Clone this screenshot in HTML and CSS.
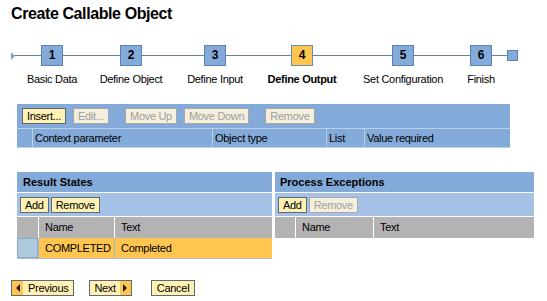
FILE: index.html
```html
<!DOCTYPE html>
<html lang="en">
<head>
    <meta charset="UTF-8">
    <title>Create Callable Object</title>
    <link rel="stylesheet" href="styles.css">
</head>
<body>
    <div class="page">
        <h1 class="title">Create Callable Object</h1>

        <!-- roadmap -->
        <div class="roadmap">
            <div class="rm-start"><span class="rm-arrow"></span></div>
            <div class="step" style="width: 74px">
                <div class="node"><span class="box">1</span></div>
                <div class="label">Basic Data</div>
            </div>
            <div class="step" style="width: 84px">
                <div class="node"><span class="box">2</span></div>
                <div class="label">Define Object</div>
            </div>
            <div class="step" style="width: 84px">
                <div class="node"><span class="box">3</span></div>
                <div class="label">Define Input</div>
            </div>
            <div class="step current" style="width: 90px">
                <div class="node"><span class="box">4</span></div>
                <div class="label">Define Output</div>
            </div>
            <div class="step" style="width: 112px">
                <div class="node"><span class="box">5</span></div>
                <div class="label">Set Configuration</div>
            </div>
            <div class="step" style="width: 44px">
                <div class="node"><span class="box">6</span></div>
                <div class="label">Finish</div>
            </div>
            <div class="rm-end"><span class="rm-square"></span></div>
        </div>

        <!-- context parameters -->
        <div class="panel params">
            <div class="toolbar dark">
                <button class="btn">Insert...</button>
                <button class="btn" disabled>Edit...</button>
                <button class="btn gap-left" disabled>Move Up</button>
                <button class="btn" disabled>Move Down</button>
                <button class="btn gap-left" disabled>Remove</button>
            </div>
            <div class="param-head">
                <div class="cell"></div>
                <div class="cell">Context parameter</div>
                <div class="cell">Object type</div>
                <div class="cell">List</div>
                <div class="cell">Value required</div>
            </div>
        </div>

        <div class="split">
            <div class="panel states">
                <div class="panel-title">Result States</div>
                <div class="toolbar light">
                    <button class="btn">Add</button>
                    <button class="btn">Remove</button>
                </div>
                <div class="table-head states-cols">
                    <div class="cell"></div>
                    <div class="cell">Name</div>
                    <div class="cell">Text</div>
                </div>
                <div class="table-row selected states-cols">
                    <div class="cell sel"></div>
                    <div class="cell">COMPLETED</div>
                    <div class="cell">Completed</div>
                </div>
            </div>

            <div class="panel exceptions">
                <div class="panel-title">Process Exceptions</div>
                <div class="toolbar light">
                    <button class="btn">Add</button>
                    <button class="btn" disabled>Remove</button>
                </div>
                <div class="table-head exc-cols">
                    <div class="cell"></div>
                    <div class="cell">Name</div>
                    <div class="cell">Text</div>
                </div>
            </div>
        </div>

        <div class="nav">
            <button class="btn nav-btn prev"><span class="arr arr-left"></span><span class="txt">Previous</span></button>
            <button class="btn nav-btn next"><span class="txt">Next</span><span class="arr arr-right"></span></button>
            <button class="btn nav-btn cancel"><span class="txt">Cancel</span></button>
        </div>
    </div>
</body>
</html>
```

FILE: styles.css
```css
body {
    margin: 0;
    background-color: #fff;
    color: #000;
    font-family: 'Liberation Sans', Arial, sans-serif;
    font-size: 11px;
    letter-spacing: -0.3px;
}
.page { padding: 0 11px; }
.title {
    margin: 0;
    padding-top: 4px;
    font-size: 16px;
    line-height: 20px;
    letter-spacing: -0.4px;
    font-weight: bold;
}

/* roadmap */
.roadmap {
    display: flex;
    margin-top: 21px;
}
.rm-start, .rm-end, .node {
    height: 21px;
    display: flex;
    align-items: center;
    background: linear-gradient(#5d83ad, #5d83ad) center / 100% 1px no-repeat;
}
.rm-start { width: 4px; }
.rm-arrow {
    width: 0; height: 0;
    border-top: 4px solid transparent;
    border-bottom: 4px solid transparent;
    border-left: 4px solid #7ea3cf;
}
.rm-end { width: 15px; justify-content: flex-end; }
.rm-square {
    width: 9px; height: 9px;
    background-color: #84aad9;
    border: 1px solid #5a82b4;
}
.step { flex: none; display: flex; flex-direction: column; align-items: center; }
.node { width: 100%; justify-content: center; }
.box {
    width: 20px; height: 19px;
    border: 1px solid #5a82b4;
    background-color: #84aad9;
    font-weight: bold;
    font-size: 12px;
    line-height: 19px;
    letter-spacing: 0;
    text-align: center;
}
.step.current .box { background-color: #ffc64f; border-color: #6a8ab0; }
.label {
    margin-top: 6px;
    line-height: 14px;
    white-space: nowrap;
}
.step.current .label { font-weight: bold; }

/* panels */
.panel { margin-left: 6px; }
.params { width: 493px; margin-top: 18px; }
.toolbar {
    display: flex;
    align-items: flex-start;
    gap: 7px;
    padding: 4px 0 0 5px;
    height: 20px;
}
.toolbar.dark { background-color: #84aad9; }
.toolbar.light {
    background-color: #a5c1e5;
    height: 19px;
    gap: 2px;
    padding-left: 3px;
    border-top: 1px solid #fff;
}
.gap-left { margin-left: 9px; }

.btn {
    height: 16px;
    padding: 0 4px;
    border: 1px solid #5d6a73;
    background-color: #fff1b4;
    color: #000;
    font-family: inherit;
    font-size: 11px;
    letter-spacing: -0.3px;
    line-height: 14px;
    cursor: pointer;
}
.btn:disabled {
    border-color: #a8a8a8;
    background-color: #f4eedd;
    color: #a0a0a0;
    cursor: default;
}

.param-head {
    display: grid;
    grid-template-columns: 15px 180px 114px 38px 1fr;
    background-color: #84aad9;
    border-top: 1px solid #b9d0ea;
    height: 19px;
}
.param-head .cell {
    line-height: 18px;
    padding-left: 2px;
    border-left: 1px solid #b9d0ea;
    border-bottom: 1px solid #b9d0ea;
    white-space: nowrap;
}
.param-head .cell:first-child { border-left: none; }

.split {
    display: flex;
    gap: 3px;
    margin: 24px 0 0 6px;
}
.split .panel { margin-left: 0; }
.states { width: 255px; }
.exceptions { width: 259px; }
.panel-title {
    height: 20px;
    line-height: 20px;
    padding-left: 6px;
    background-color: #84aad9;
    font-weight: bold;
    letter-spacing: 0;
}
.exceptions .panel-title { padding-left: 5px; }

.table-head, .table-row { display: grid; }
.states-cols { grid-template-columns: 21px 76px 1fr; }
.exc-cols { grid-template-columns: 20px 78px 1fr; }
.table-head {
    background-color: #b3b3b3;
    border-top: 1px solid #fff;
    height: 21px;
}
.table-head .cell {
    line-height: 21px;
    padding-left: 6px;
    border-left: 1px solid #fff;
}
.table-head .cell:first-child { border-left: none; }
.table-row {
    height: 20px;
    background-color: #ffc551;
    border-bottom: 1px solid #b0b8c4;
}
.table-row .cell {
    line-height: 20px;
    padding-left: 6px;
    border-left: 1px solid #a9b6c6;
}
.table-row .cell.sel {
    background-color: #adcbdc;
    border: 1px solid #86a8d0;
    padding: 0;
}

/* wizard navigation */
.nav {
    display: flex;
    align-items: center;
    margin-top: 21px;
}
.nav-btn {
    display: flex;
    align-items: stretch;
    padding: 0;
    height: 16px;
}
.nav-btn .txt { padding: 0 5px; line-height: 14px; }
.next { margin-left: 15px; }
.next .txt { padding: 0 4px; }
.cancel { margin-left: 19px; }
.arr {
    width: 11px;
    background-color: #ffc551;
    display: flex;
    align-items: center;
    justify-content: center;
}
.arr::before {
    content: "";
    width: 0; height: 0;
    border-top: 4px solid transparent;
    border-bottom: 4px solid transparent;
}
.arr-left::before { border-right: 4px solid #222; }
.arr-right::before { border-left: 4px solid #222; }
```
